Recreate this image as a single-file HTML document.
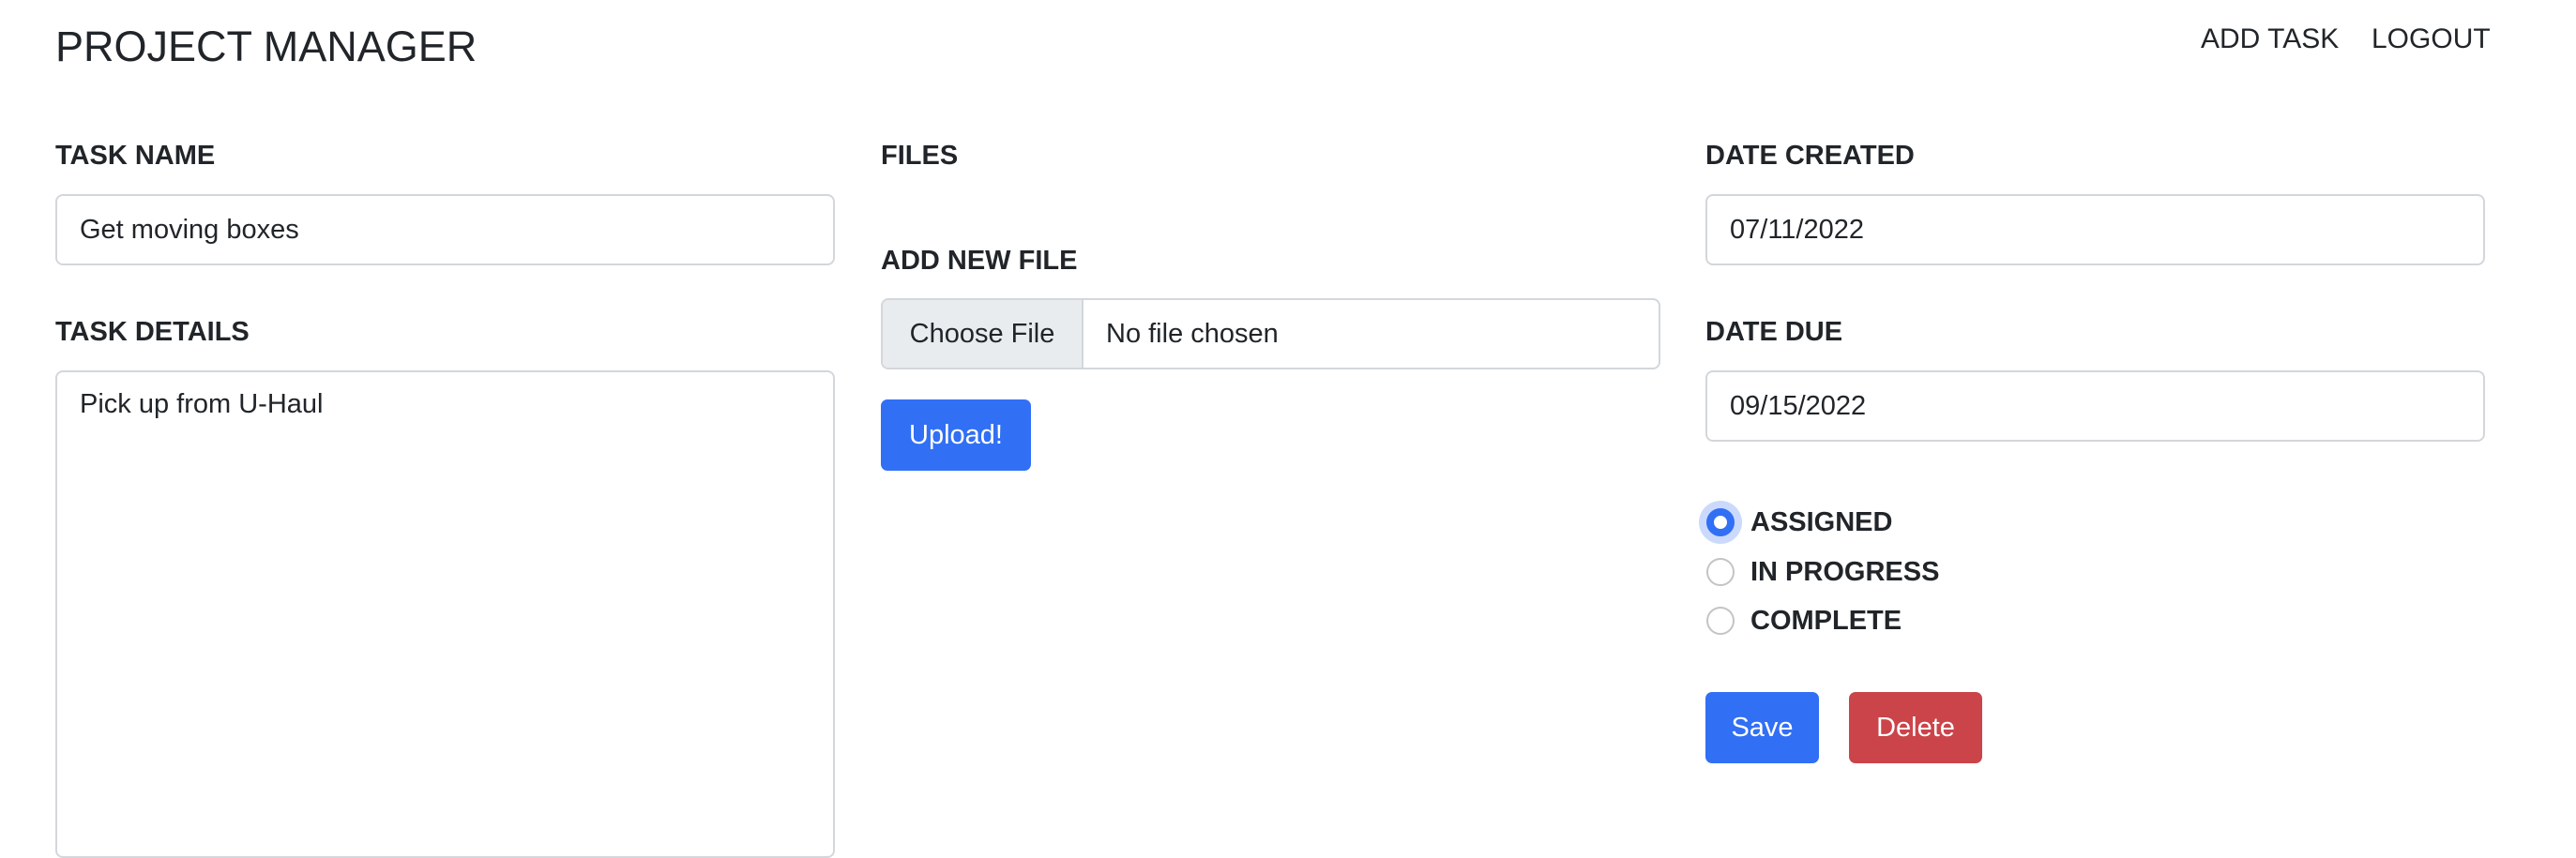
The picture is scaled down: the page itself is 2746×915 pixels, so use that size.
<!DOCTYPE html>
<html><head><style>
*{box-sizing:border-box;margin:0;padding:0}
body{width:2746px;height:860px;overflow:hidden;background:#fff;font-family:"Liberation Sans",Arial,sans-serif;color:#212529;position:relative}
.a{position:absolute}
.title{left:59px;top:22px;font-size:45px;line-height:56px}
.nav{top:24px;font-size:30px;line-height:36px}
.lbl{font-size:29px;font-weight:bold;line-height:36px}
.inp{border:2px solid #d3d7db;border-radius:8px;width:831px;height:76px;font-size:29px;padding:0 24px;line-height:72px}
.btn{color:#fff;border-radius:7px;font-size:29px;text-align:center;line-height:76px;height:76px}
.radio{width:30px;height:30px;border-radius:50%;border:2px solid #c4c4c4;background:#fff}
</style></head><body>
<div class="a title">PROJECT MANAGER</div>
<div class="a nav" style="left:2346px">ADD TASK</div>
<div class="a nav" style="left:2528px">LOGOUT</div>

<div class="a lbl" style="left:59px;top:148px">TASK NAME</div>
<div class="a inp" style="left:59px;top:207px">Get moving boxes</div>
<div class="a lbl" style="left:59px;top:336px">TASK DETAILS</div>
<div class="a inp" style="left:59px;top:395px;height:520px;line-height:44px;padding-top:12px">Pick up from U-Haul</div>

<div class="a lbl" style="left:939px;top:148px">FILES</div>
<div class="a lbl" style="left:939px;top:260px">ADD NEW FILE</div>
<div class="a inp" style="left:939px;top:318px;padding:0;overflow:hidden"><span style="display:inline-block;background:#e9ecef;border-right:2px solid #d3d7db;height:72px;width:214px;text-align:center">Choose File</span><span style="padding-left:24px">No file chosen</span></div>
<div class="a btn" style="left:939px;top:426px;width:160px;background:#316ff5">Upload!</div>

<div class="a lbl" style="left:1818px;top:148px">DATE CREATED</div>
<div class="a inp" style="left:1818px;top:207px">07/11/2022</div>
<div class="a lbl" style="left:1818px;top:336px">DATE DUE</div>
<div class="a inp" style="left:1818px;top:395px">09/15/2022</div>

<div class="a" style="left:1811px;top:534px;width:46px;height:46px;border-radius:50%;background:#cbdafc"></div>
<div class="a radio" style="left:1819px;top:542px;border:8px solid #316ff5"></div>
<div class="a radio" style="left:1819px;top:595px"></div>
<div class="a radio" style="left:1819px;top:647px"></div>
<div class="a lbl" style="left:1866px;top:539px">ASSIGNED</div>
<div class="a lbl" style="left:1866px;top:592px">IN PROGRESS</div>
<div class="a lbl" style="left:1866px;top:644px">COMPLETE</div>

<div class="a btn" style="left:1818px;top:738px;width:121px;background:#316ff5">Save</div>
<div class="a btn" style="left:1971px;top:738px;width:142px;background:#cb444a">Delete</div>
</body></html>
